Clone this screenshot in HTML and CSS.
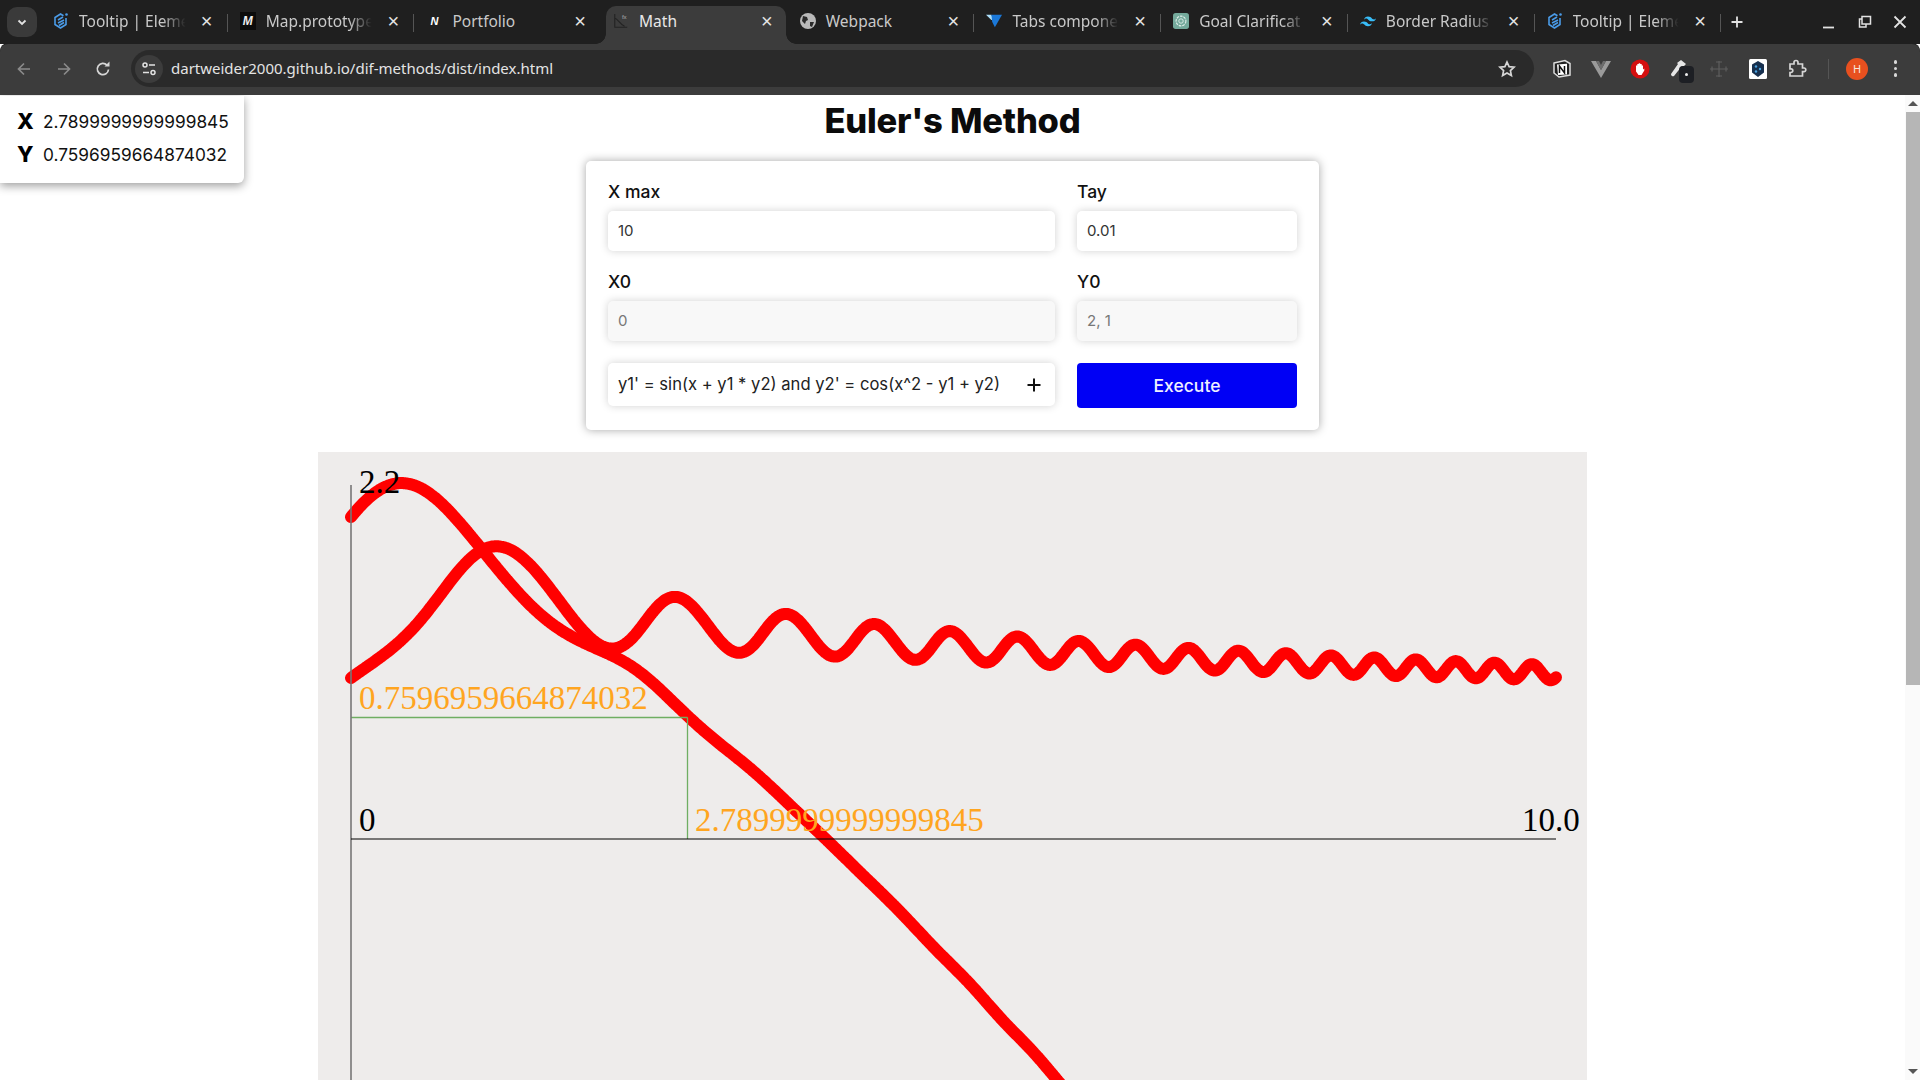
FILE: index.html
```html
<!DOCTYPE html>
<html lang="en">
<head>
<meta charset="utf-8">
<title>Math</title>
<link rel="stylesheet" href="styles.css">
</head>
<body>
<div class="window">
  <header class="tabstrip">
    <button class="tab-list"><svg width="12" height="12" viewBox="0 0 12 12"><path class="ico-w2" d="M2.5 4.5 6 8l3.5-3.5"/></svg></button>
    <div class="tab"><svg class="fav" viewBox="0 0 16 18"><path class="ico-el" d="M13 6v6.5L7.5 16 2 12.5v-7L7.5 2l3 1.8"/><path class="ico-el" d="M5 11l6-3M5 8l5-3M6 13.5l5-3"/><circle cx="13.5" cy="2.5" r="1.3" fill="#4a9be8"/></svg><span class="title">Tooltip | Eleme</span><span class="close">×</span></div><i class="sep"></i>
    <div class="tab"><span class="fav fav-m">M</span><span class="title">Map.prototype</span><span class="close">×</span></div><i class="sep"></i>
    <div class="tab"><span class="fav fav-n">N</span><span class="title title-full">Portfolio</span><span class="close">×</span></div><i class="sep sep-off"></i>
    <div class="tab tab-active"><i class="flare flare-l"></i><svg class="fav" viewBox="0 0 18 18"><path d="M2 1v15h14M2 6c3 0 5 6 11 9" fill="none" stroke="#222" stroke-width="1.2"/><text x="10" y="7" class="fx">fx</text></svg><span class="title title-full">Math</span><span class="close">×</span><i class="flare flare-r"></i></div><i class="sep sep-off"></i>
    <div class="tab"><svg class="fav" viewBox="0 0 16 16"><circle cx="8" cy="8" r="8" fill="#b9b9b9"/><path d="M3 3l4 1 1 3-2 1-1 3-3-3zM10 9l4 0-2 5-2-1z" fill="#2a2a2a"/></svg><span class="title title-full">Webpack</span><span class="close">×</span></div><i class="sep"></i>
    <div class="tab"><svg class="fav" viewBox="0 0 18 16"><path d="M0 1h6l3 6-3 0z" fill="#aee0fb"/><path d="M6 1h12L10 15 7 9z" fill="#1b78d8"/></svg><span class="title">Tabs compone</span><span class="close">×</span></div><i class="sep"></i>
    <div class="tab"><svg class="fav" viewBox="0 0 18 18"><rect width="18" height="18" rx="3" fill="#74aa9c"/><circle cx="9" cy="9" r="5.5" fill="none" stroke="#dfeee9" stroke-width="1.3" stroke-dasharray="3 1"/><circle cx="9" cy="9" r="2.5" fill="none" stroke="#dfeee9"/></svg><span class="title">Goal Clarificat</span><span class="close">×</span></div><i class="sep"></i>
    <div class="tab"><svg class="fav" viewBox="0 0 18 12"><path d="M9 1C6.600 1 5.100 2.200 4.500 4.600c.9-1.200 2-1.600 3.100-1.300.7.200 1.100.7 1.700 1.200.9.900 1.900 1.900 4.200 1.900 2.400 0 3.900-1.200 4.500-3.600-.9 1.200-2 1.600-3.100 1.300-.7-.2-1.100-.7-1.700-1.200C12.300 2 11.300 1 9 1zM4.500 6.500C2.100 6.500.6 7.700 0 10.100c.9-1.200 2-1.600 3.100-1.300.7.200 1.100.7 1.700 1.200.9.900 1.900 1.900 4.200 1.900 2.400 0 3.900-1.200 4.500-3.600-.9 1.200-2 1.600-3.100 1.300-.7-.2-1.100-.7-1.700-1.200-.9-.9-1.900-1.900-4.200-1.900z" fill="#38bdf8"/></svg><span class="title">Border Radius</span><span class="close">×</span></div><i class="sep"></i>
    <div class="tab"><svg class="fav" viewBox="0 0 16 18"><path class="ico-el" d="M13 6v6.5L7.5 16 2 12.500v-7L7.500 2l3 1.800"/><path class="ico-el" d="M5 11l6-3M5 8l5-3M6 13.500l5-3"/><circle cx="13.500" cy="2.500" r="1.300" fill="#4a9be8"/></svg><span class="title">Tooltip | Eleme</span><span class="close">×</span></div><i class="sep"></i>
    <button class="newtab"><svg width="14" height="14" viewBox="0 0 14 14"><path class="ico-w2" d="M7 1.500v11M1.500 7h11"/></svg></button>
    <div class="winctl">
      <svg width="14" height="14" viewBox="0 0 14 14"><path class="ico-w2" d="M1 12.500h11"/></svg>
      <svg width="14" height="14" viewBox="0 0 14 14"><path class="ico-w15" d="M4 1.500h8.500V9H4zM4 4H1.500v8H8V9.500"/></svg>
      <svg width="14" height="14" viewBox="0 0 14 14"><path class="ico-w2" d="M1.500 1.500l11 11M12.500 1.500l-11 11"/></svg>
    </div>
  </header>

  <nav class="toolbar">
    <button class="navbtn"><svg width="16" height="16" viewBox="0 0 16 16"><path class="ico-dim" d="M14 8H2.500M8 2.500 2.500 8 8 13.500"/></svg></button>
    <button class="navbtn"><svg width="16" height="16" viewBox="0 0 16 16"><path class="ico-dim" d="M2 8h11.500M8 2.500 13.500 8 8 13.500"/></svg></button>
    <button class="navbtn navbtn-reload"><svg width="16" height="16" viewBox="0 0 16 16"><path class="ico-lt" d="M13.500 8.500A5.600 5.600 0 1 1 12 4.200"/><path d="M9.500 5.500h5v-5z" fill="#d6d6d6"/></svg></button>
    <div class="omnibox">
      <span class="site"><svg width="16" height="16" viewBox="0 0 16 16"><circle cx="4" cy="4" r="2" class="ico-thin"/><path class="ico-thin" d="M8 4h6M2 11.500h6"/><circle cx="12" cy="11.500" r="2" class="ico-thin"/></svg></span>
      <span class="url">dartweider2000.github.io/dif-methods/dist/index.html</span>
      <svg class="star" width="18" height="18" viewBox="0 0 18 18"><path class="ico-lt" d="M9 2l2.100 4.600 5 .6-3.700 3.400 1 5L9 13.100l-4.400 2.500 1-5L1.900 7.200l5-.6z"/></svg>
    </div>
    <div class="exts">
      <span class="ext"><svg width="20" height="20" viewBox="0 0 20 20"><path d="M2 4l11-2.500 5 3V16l-11 2-5-4z" fill="#222" stroke="#ddd" stroke-width="1.500"/><path d="M5 5.500l10-.8V15.500L6 16z" fill="#fff"/><path d="M7.500 14V7l5 7V7" fill="none" stroke="#111" stroke-width="1.500"/></svg></span>
      <span class="ext"><svg width="20" height="18" viewBox="0 0 20 18"><path d="M0 1h5l5 9 5-9h5L10 18z" fill="#9a9a9a"/><path d="M5 1h3l2 4 2-4h3l-5 9z" fill="#6d6d6d"/></svg></span>
      <span class="ext"><svg width="20" height="20" viewBox="0 0 20 20"><circle cx="10" cy="10" r="9.500" fill="#d40f0f"/><path d="M6 9V6.500h1.300V5h1.400v-.8h1.500V5h1.500v1.500H13v4l1.300-1v2L11.500 16H8.500L6 12.500z" fill="#fff"/></svg></span>
      <span class="ext ext-pen"><svg width="20" height="22" viewBox="0 0 20 22"><path d="M12 2l5 4-3 3-1-1-8 10a2 2 0 0 1-3-2l7-10-1-1z" fill="#e6e6e6"/></svg><i class="badge"><b></b></i></span>
      <span class="ext"><svg width="20" height="20" viewBox="0 0 20 20"><path d="M10 2v16M1 10h18M7 3h6M7 17h6M3 7.500v5M17 7.500v5" stroke="#5e5e5e" stroke-width="1.200" fill="none"/></svg></span>
      <span class="ext"><svg width="18" height="20" viewBox="0 0 18 20"><rect width="18" height="20" rx="1.500" fill="#fff"/><path d="M9 2l6 3.500v8L9 18l-6-4.500v-8z" fill="#17304f"/><circle cx="7" cy="7.500" r="1.200" fill="#4aa3e0"/><circle cx="11" cy="10" r="1.200" fill="#4aa3e0"/><circle cx="7" cy="12.500" r="1.200" fill="#4aa3e0"/></svg></span>
      <span class="ext"><svg width="20" height="20" viewBox="0 0 20 20"><path class="ico-lt" d="M3 5h4V3.500a1.800 1.800 0 0 1 4 0V5h4.500v4H17a1.800 1.800 0 0 1 0 3.600h-1.500V17H3v-3.500h1a1.800 1.800 0 0 0 0-3.600H3z"/></svg></span>
    </div>
    <i class="tb-sep"></i>
    <span class="avatar-wrap"><span class="avatar">H</span></span>
    <span class="dots"><i></i><i></i><i></i></span>
  </nav>

  <div class="viewport">
    <main class="page">
      <aside class="readout">
        <div class="readout-row"><b>X</b><span>2.7899999999999845</span></div>
        <div class="readout-row"><b>Y</b><span>0.7596959664874032</span></div>
      </aside>
      <h1 class="heading">Euler's Method</h1>
      <form class="card">
        <label class="field"><span class="field-label">X max</span><input class="input" value="10"></label>
        <label class="field"><span class="field-label">Tay</span><input class="input" value="0.01"></label>
        <label class="field"><span class="field-label">X0</span><input class="input input-off" value="0" disabled></label>
        <label class="field"><span class="field-label">Y0</span><input class="input input-off" value="2, 1" disabled></label>
        <div class="equation"><span class="equation-text">y1' = sin(x + y1 * y2) and y2' = cos(x^2 - y1 + y2)</span><svg width="16" height="16" viewBox="0 0 16 16"><path d="M8 1.500v13M1.500 8h13" stroke="#111" stroke-width="2" fill="none"/></svg></div>
        <button type="button" class="execute">Execute</button>
      </form>
      <svg class="chart" id="chart" width="1269" height="628" viewBox="0 0 1269 628">
        <polyline id="curve1" class="curve"></polyline>
        <polyline id="curve2" class="curve"></polyline>
        <line class="guide" x1="33" y1="265.500" x2="369.500" y2="265.500"></line>
        <line class="guide" x1="369.500" y1="265.500" x2="369.500" y2="387"></line>
        <line class="axis-y" x1="33" y1="33" x2="33" y2="628"></line>
        <line class="axis-x" x1="33" y1="387" x2="1238" y2="387"></line>
        <text class="lbl" x="41" y="41">2.2</text>
        <text class="lbl" x="41" y="379">0</text>
        <text class="lbl" x="1204" y="379">10.0</text>
        <text class="lbl lbl-o" x="41" y="257">0.7596959664874032</text>
        <text class="lbl lbl-o" x="377" y="379">2.7899999999999845</text>
      </svg>
    </main>
    <div class="scrollbar">
      <span class="arrow arrow-up"></span>
      <span class="thumb"></span>
      <span class="arrow arrow-down"></span>
    </div>
  </div>
</div>
<script src="chart.js"></script>
</body>
</html>
```

FILE: styles.css
```css
* { box-sizing: border-box; }
html, body { margin: 0; height: 100%; overflow: hidden; background: #fff; }
button { border: 0; padding: 0; background: none; font: inherit; }
.window { height: 1080px; display: flex; flex-direction: column; }

/* tab strip */
.tabstrip { height: 44px; flex: none; background: #1f1f1f; display: flex; align-items: flex-end; padding-left: 7px; color: #dedede; font-family: "Noto Sans", sans-serif; font-size: 15.500px; }
.tab-list { width: 30px; height: 30px; margin: 0 4px 7px 0; border-radius: 10px; background: #3a3a3a; display: flex; align-items: center; justify-content: center; flex: none; }
.tab { width: 185.700px; height: 38px; flex: none; display: flex; align-items: center; padding: 0 12px 8px; position: relative; color: #c9c9c9; }
.tab-active { color: #e8e8e8; }
.tab-active::before { content: ""; position: absolute; left: 5px; right: 1px; top: 0; bottom: 0; background: #3c3c3c; border-radius: 10px 10px 0 0; }
.tab-active > * { position: relative; }
.tab-active .flare { position: absolute; bottom: 0; width: 10px; height: 10px; }
.flare-l { left: -5px; background: radial-gradient(circle at 0 0, transparent 9.500px, #3c3c3c 10px); }
.flare-r { right: -9px; background: radial-gradient(circle at 100% 0, transparent 9.500px, #3c3c3c 10px); }
.fav { width: 16px; height: 18px; flex: none; margin-right: 10px; }
.fav-m { background: #0b0b0b; color: #eee; font: italic 700 12px/18px "Liberation Sans", sans-serif; text-align: center; }
.fav-n { color: #fff; font: italic 800 11px/18px "Liberation Sans", sans-serif; text-align: center; }
.fx { font: 7px "Liberation Sans", sans-serif; fill: #aaa; }
.title { flex: 1; min-width: 0; white-space: nowrap; margin-right: 4px; -webkit-mask-image: linear-gradient(90deg, #000 72%, transparent 92%); mask-image: linear-gradient(90deg, #000 72%, transparent 92%); }
.title-full { -webkit-mask-image: none; mask-image: none; }
.close { flex: none; width: 16px; text-align: center; font-size: 20px; line-height: 16px; color: #e4e4e4; font-family: "Liberation Sans", sans-serif; }
.sep { width: 1px; height: 18px; margin-bottom: 12px; background: #555; flex: none; }
.sep-off { background: transparent; }
.newtab { width: 32px; height: 24px; margin-bottom: 10px; flex: none; display: flex; align-items: center; justify-content: center; }
.winctl { margin-left: auto; height: 30px; margin-bottom: 7px; width: 85px; margin-right: 13px; display: flex; align-items: center; justify-content: space-between; }
.ico-w2 { fill: none; stroke: #e2e2e2; stroke-width: 1.800; }
.ico-w15 { fill: none; stroke: #e2e2e2; stroke-width: 1.500; }
.ico-el { fill: none; stroke: #4a9be8; stroke-width: 1.600; }

/* toolbar */
.toolbar { height: 51px; flex: none; background: #3c3c3c; border-radius: 8px 8px 0 0; display: flex; align-items: center; padding: 0 5px 2px 4px; font-family: "Noto Sans", sans-serif; box-shadow: 0 -1px 0 #1f1f1f; }
.navbtn { width: 40px; height: 32px; flex: none; display: flex; align-items: center; justify-content: center; }
.navbtn-reload { padding-right: 2px; }
.ico-dim { fill: none; stroke: #8a8a8a; stroke-width: 1.700; }
.ico-lt { fill: none; stroke: #d6d6d6; stroke-width: 1.700; }
.ico-thin { fill: none; stroke: #e2e2e2; stroke-width: 1.500; }
.omnibox { flex: 1; min-width: 0; height: 37px; margin: 0 9.500px 0 7px; border-radius: 19px; background: #2a2a2a; display: flex; align-items: center; padding-left: 4px; }
.site { width: 28px; height: 28px; border-radius: 50%; background: #3c3c3c; display: flex; align-items: center; justify-content: center; flex: none; }
.url { margin-left: 8px; padding-bottom: 2px; color: #e4e4e4; font-size: 15px; white-space: nowrap; }
.star { margin-left: auto; margin-right: 18px; flex: none; }
.exts { display: flex; flex: none; margin-left: -2px; }
.ext { width: 39.300px; height: 26px; display: flex; align-items: center; justify-content: center; position: relative; }
.badge { position: absolute; left: 19px; top: 10px; width: 15px; height: 17px; background: #1d1f24; border-radius: 4px; display: flex; align-items: center; justify-content: center; }
.badge b { width: 3px; height: 3px; background: #eee; border-radius: 50%; }
.tb-sep { width: 1px; height: 20px; background: #555; margin-left: 11px; flex: none; }
.avatar-wrap { width: 38px; margin-left: 9px; display: flex; justify-content: center; flex: none; }
.avatar { width: 22px; height: 22px; border-radius: 50%; background: #e8501f; color: #f6e6df; font-size: 11px; line-height: 22px; text-align: center; }
.dots { width: 39px; flex: none; display: flex; flex-direction: column; align-items: center; gap: 3px; }
.dots i { width: 3.500px; height: 3.500px; border-radius: 50%; background: #d8d8d8; }

/* page */
.viewport { flex: 1; min-height: 0; display: flex; }
.page { flex: 1; min-width: 0; position: relative; overflow: hidden; display: flex; flex-direction: column; align-items: center; padding-top: 5px; font-family: Inter, "Noto Sans", sans-serif; color: #111; }
.readout { position: absolute; left: 0; top: 1px; width: 244px; height: 87px; background: #fff; border-radius: 0 0 6px 0; box-shadow: 0 3px 10px rgba(0,0,0,.38); padding: 13px 17px; display: flex; flex-direction: column; gap: 9px; z-index: 2; }
.readout-row { display: flex; align-items: center; gap: 11px; height: 24px; font-size: 17.300px; }
.readout-row b { font-size: 22px; font-weight: 800; width: 15px; flex: none; color: #000; }
.heading { margin: 0 0 19px; height: 42px; font-size: 34.500px; line-height: 42px; font-weight: 800; color: #0b0b0b; letter-spacing: -.2px; }
.card { width: 733px; height: 269px; flex: none; background: #fff; border-radius: 5px; box-shadow: 0 0 10px rgba(0,0,0,.35); padding: 22px; display: grid; grid-template-columns: 447px 220px; column-gap: 22px; row-gap: 22px; align-content: start; }
.field { display: flex; flex-direction: column; gap: 11px; }
.field-label { font-size: 17.500px; line-height: 17px; font-weight: 500; color: #111; }
.input { width: 100%; height: 40px; border: 0; outline: 0; border-radius: 5px; background: #fff; box-shadow: 0 0 8px rgba(0,0,0,.18); padding: 0 10px 1px; font: 400 15px Inter, sans-serif; color: #333; }
.input-off { background: #f8f8f8; color: #777; }
.equation { height: 43px; border-radius: 5px; background: #fff; box-shadow: 0 0 8px rgba(0,0,0,.18); padding: 0 13px 0 10px; display: flex; align-items: center; justify-content: space-between; font-size: 16.600px; color: #222; white-space: nowrap; }
.equation-text { padding-bottom: 1px; }
.execute { height: 45px; border-radius: 4px; background: #0000f5; color: #f0f0ff; font-size: 17.500px; font-weight: 500; font-family: Inter, sans-serif; }
.chart { flex: none; margin-top: 22px; background: #eeeceb; display: block; overflow: hidden; }
.curve { fill: none; stroke: #ff0000; stroke-width: 12; stroke-linecap: round; stroke-linejoin: round; }
.guide { stroke: #6fae62; stroke-width: 1.300; }
.axis-y { stroke: #777; stroke-width: 1.600; }
.axis-x { stroke: #000; stroke-width: 1.200; }
.lbl { font: 33px "Liberation Serif", serif; fill: #000; }
.lbl-o { fill: #ffa51f; }

/* scrollbar */
.scrollbar { width: 15px; flex: none; background: #fafafa; display: flex; flex-direction: column; align-items: flex-end; padding-bottom: 3px; }
.arrow { width: 0; height: 0; border-left: 5px solid transparent; border-right: 5px solid transparent; flex: none; margin-right: 2px; }
.arrow-up { border-bottom: 5px solid #555; margin-top: 6px; margin-bottom: 6px; }
.arrow-down { border-top: 5px solid #555; margin-top: auto; margin-bottom: 3px; }
.thumb { width: 14px; height: 573px; background: #b6b6b6; flex: none; }
```

FILE: chart.js
```js
(function () {
  var sx = 120.5, sy = 161, ox = 33, oy = 387;
  var x = 0, y1 = 2, y2 = 1, h = 0.01;
  var a = [], b = [];
  while (x <= 10 + 1e-9) {
    a.push((ox + x * sx).toFixed(1) + ',' + (oy - y1 * sy).toFixed(1));
    b.push((ox + x * sx).toFixed(1) + ',' + (oy - y2 * sy).toFixed(1));
    var d1 = Math.sin(x + y1 * y2);
    var d2 = Math.cos(x * x - y1 + y2);
    y1 += h * d1;
    y2 += h * d2;
    x += h;
  }
  document.getElementById('curve1').setAttribute('points', a.join(' '));
  document.getElementById('curve2').setAttribute('points', b.join(' '));
})();
```
